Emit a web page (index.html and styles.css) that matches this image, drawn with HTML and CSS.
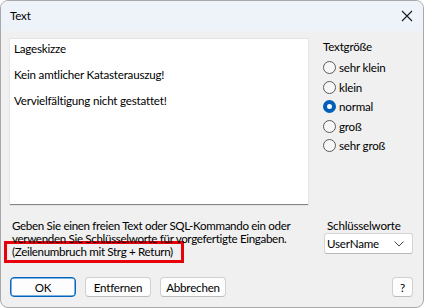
FILE: index.html
```html
<!DOCTYPE html>
<html lang="de">
<head>
<meta charset="utf-8">
<title>Text</title>
<link rel="stylesheet" href="styles.css">
</head>
<body>
<div class="window">
  <div class="titlebar">
    <span class="title">Text</span>
    <svg class="close" width="12" height="12" viewBox="0 0 12 12"><path d="M1 1 L11 11 M11 1 L1 11" stroke="#1a1a1a" stroke-width="1.1" fill="none"/></svg>
  </div>
  <div class="content">
    <div class="top">
      <div class="editbox">
        <p>Lageskizze</p>
        <p>Kein amtlicher Katasterauszug!</p>
        <p>Vervielfältigung nicht gestattet!</p>
      </div>
      <div class="sizes">
        <div class="group-label">Textgröße</div>
        <div class="radio"><span class="dot"></span>sehr klein</div>
        <div class="radio"><span class="dot"></span>klein</div>
        <div class="radio"><span class="dot on"></span>normal</div>
        <div class="radio"><span class="dot"></span>groß</div>
        <div class="radio"><span class="dot"></span>sehr groß</div>
      </div>
    </div>
    <div class="middle">
      <div class="hint">
        <div>Geben Sie einen freien Text oder SQL-Kommando ein oder</div>
        <div>verwenden Sie Schlüsselworte für vorgefertigte Eingaben.</div>
        <div class="marked">(Zeilenumbruch mit Strg + Return)</div>
      </div>
      <div class="keywords">
        <div class="kw-label">Schlüsselworte</div>
        <div class="select">
          <span>UserName</span>
          <svg width="10" height="6" viewBox="0 0 10 6"><path d="M0.5 0.5 L5 5 L9.5 0.5" stroke="#444" stroke-width="1" fill="none"/></svg>
        </div>
      </div>
    </div>
    <div class="buttons">
      <div class="btn default">OK</div>
      <div class="btn">Entfernen</div>
      <div class="btn">Abbrechen</div>
      <div class="spacer"></div>
      <div class="btn help">?</div>
    </div>
  </div>
</div>
</body>
</html>
```
FILE: styles.css
```css
* { box-sizing: border-box; }
html, body { margin: 0; padding: 0; background: #ffffff; }
body {
  font-family: "Lato", "Noto Sans", sans-serif;
  font-size: 11.6px;
  letter-spacing: -0.2px;
  color: #000;
  white-space: nowrap;
}
.window {
  width: 424px;
  height: 308px;
  border: 1px solid #a8a8a8;
  border-radius: 8px;
  overflow: hidden;
  background: #f0f0f0;
  display: flex;
  flex-direction: column;
}
.titlebar {
  height: 30px;
  flex: none;
  background: #eef3fa;
  display: flex;
  align-items: center;
  padding: 0 10px 0 9px;
}
.title { flex: 1; line-height: 14px; }
.content {
  flex: 1;
  padding: 8px 10px 0 9px;
  display: flex;
  flex-direction: column;
}
.top { display: flex; }
.editbox {
  width: 298px;
  height: 166px;
  flex: none;
  background: #fff;
  border-bottom: 1px solid #848484;
  box-shadow: 0 0 0 1px #e4e4e4;
  padding: 3px 4px;
  line-height: 13px;
}
.editbox p { margin: 0 0 13px 0; }
.sizes {
  margin-left: 15px;
  line-height: 13px;
}
.group-label { margin-top: 1px; margin-bottom: 8px; }
.radio {
  display: flex;
  align-items: center;
  height: 13px;
  margin-bottom: 6.6px;
}
.dot {
  width: 13px;
  height: 13px;
  border-radius: 50%;
  border: 1px solid #5a5a5a;
  background: #f7f7f7;
  margin-right: 3px;
  flex: none;
}
.dot.on {
  border: 4px solid #005fb8;
  background: #fff;
}
.middle {
  display: flex;
  margin-top: 14px;
  line-height: 13px;
}
.hint { width: 306px; flex: none; padding-left: 2px; letter-spacing: -0.33px; }
.hint > div { height: 12.5px; }
.marked {
  width: fit-content;
  margin: -3px 0 0 -8px;
  height: auto !important;
  border: 3px solid #e8000b;
  padding: 1px 8px 2px 5px;
}
.keywords { margin-left: 8px; }
.kw-label { padding-left: 3px; }
.select {
  width: 89px;
  height: 21px;
  margin-top: 1px;
  background: #fff;
  border: 1px solid #d4d4d4;
  border-bottom-color: #b8b8b8;
  border-radius: 3px;
  display: flex;
  align-items: center;
  justify-content: space-between;
  padding: 0 8px 0 2px;
}
.buttons {
  display: flex;
  margin-top: 14px;
  gap: 9px;
}
.btn {
  width: 66px;
  height: 20px;
  background: #fdfdfd;
  border: 1px solid #d0d0d0;
  border-bottom-color: #bcbcbc;
  border-radius: 4px;
  display: flex;
  align-items: center;
  justify-content: center;
}
.btn.default { border: 1px solid #0067c0; box-shadow: inset 0 0 0 0.5px #0067c0; }
.spacer { flex: 1; }
.btn.help { width: 21px; }
```
